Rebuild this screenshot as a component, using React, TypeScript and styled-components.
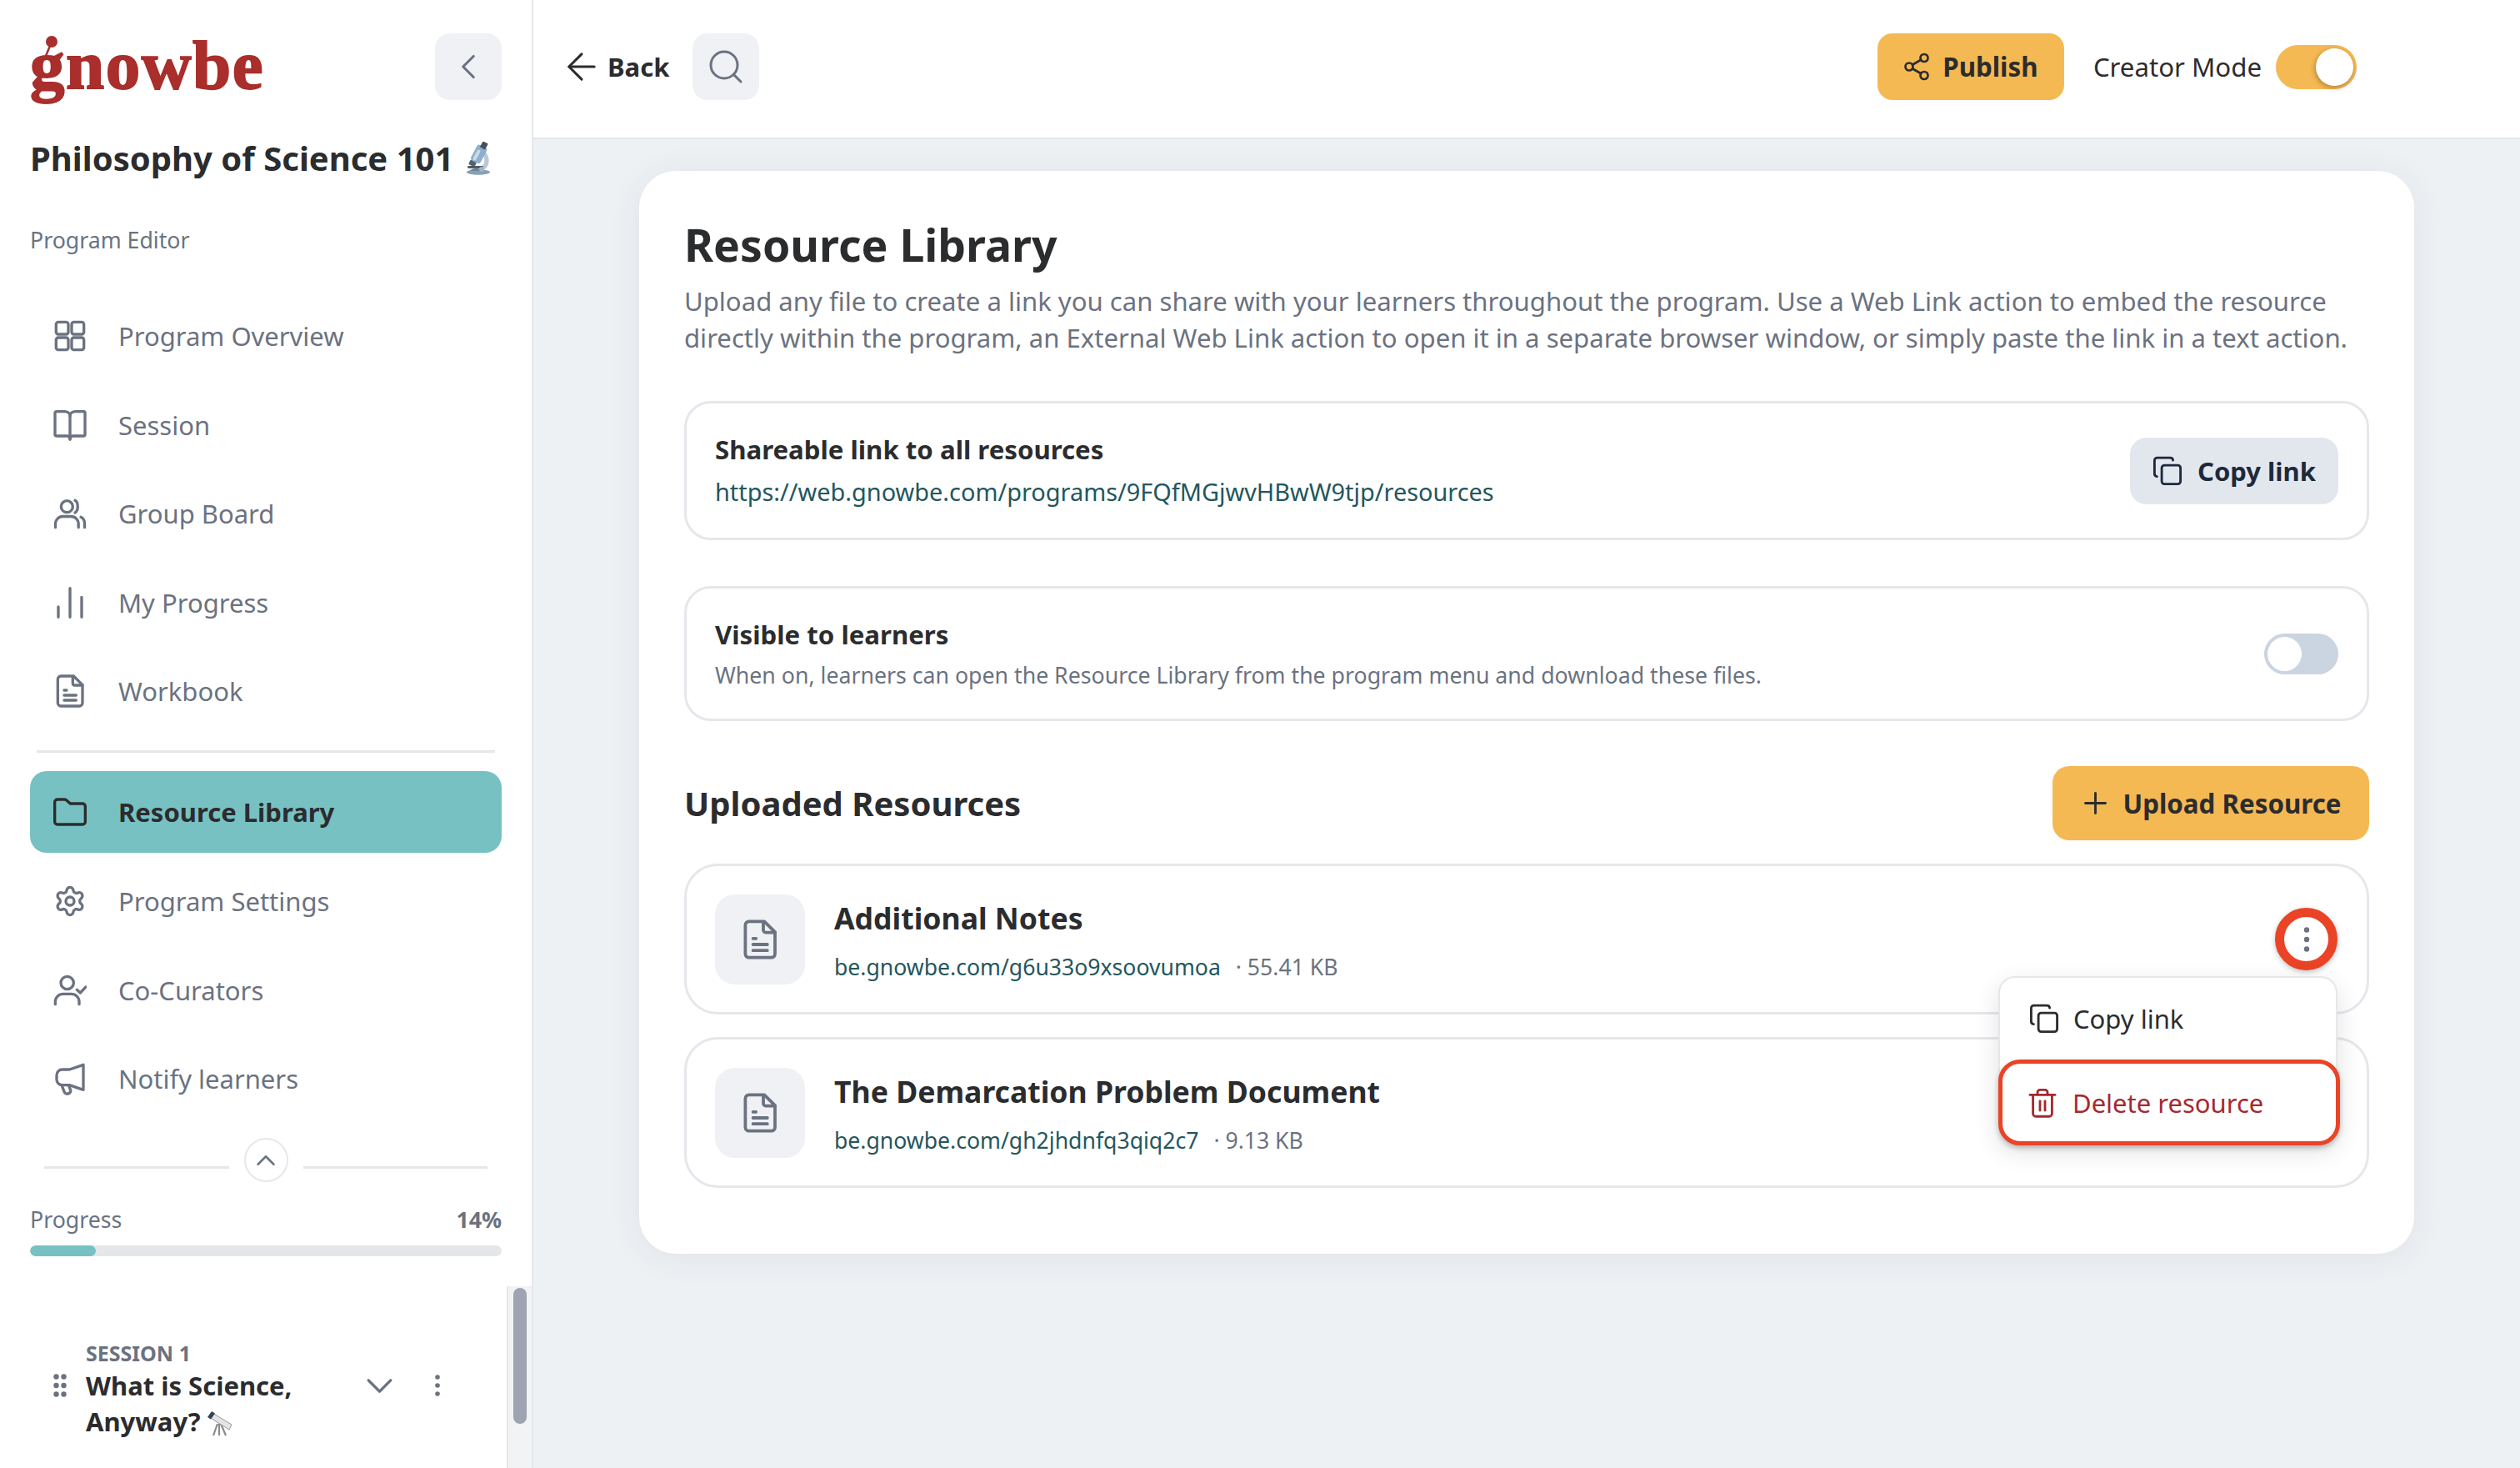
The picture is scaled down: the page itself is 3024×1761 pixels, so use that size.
import React from 'react';
import styled, { createGlobalStyle } from 'styled-components';
import { ChevronLeft, ChevronUp, ChevronDown, Settings, Share2, Plus, ArrowLeft, Search } from 'lucide-react';

const Global = createGlobalStyle`
  * { box-sizing: border-box; }
  html, body { margin: 0; padding: 0; background: #fff; }
  body { font-family: "Noto Sans", "Open Sans", sans-serif; color: #2b2c2e; }
`;

const gray = '#6b7280';
const ink = '#2b2c2e';
const line = '#e5e7eb';
const teal = '#78c1c2';
const amber = '#f5b953';
const linkColor = '#24565c';
const red = '#ea4325';

const Shell = styled.div`
  display: flex; width: 3024px; height: 1761px; overflow: hidden; background: #eef1f4;
`;
const Sidebar = styled.aside`
  width: 640px; height: 100%; flex: none; display: flex; flex-direction: column;
  background: #fff; border-right: 2px solid ${line};
`;
const SideHead = styled.div`
  display: flex; justify-content: space-between; align-items: center;
  margin: 40px 36px 0 36px; height: 80px;
`;
const Logo = styled.div`
  position: relative; font-family: "Liberation Serif", serif; font-weight: 700;
  font-size: 83px; line-height: 80px; color: #a92e2c; letter-spacing: 1.5px;
  -webkit-text-stroke: 1.8px #a92e2c; margin-top: -4px;
`;
const LogoEar = styled.svg`
  position: absolute; left: 14px; top: 3px; width: 40px; height: 34px;
`;
const SquareBtn = styled.button`
  width: 80px; height: 80px; border: 0; border-radius: 18px; background: #eff1f4; color: ${gray};
  display: flex; align-items: center; justify-content: center; padding: 0; flex: none;
`;
const Course = styled.div`
  margin: 42px 0 0 36px; height: 56px; display: flex; align-items: center; gap: 14px;
  font-size: 40px; line-height: 56px; font-weight: 700; color: ${ink}; white-space: nowrap;
`;
const SideCaption = styled.div`
  margin: 50px 0 0 36px; height: 40px; font-size: 26.7px; line-height: 40px; color: ${gray};
`;
const NavGroup = styled.nav<{ $top: number }>`
  margin: ${p => p.$top}px 36px 0 36px; display: flex; flex-direction: column; gap: 8.6px;
`;
const NavItem = styled.div<{ $active?: boolean }>`
  height: 98px; display: flex; align-items: center; gap: 38px; padding-left: 28px;
  border-radius: 20px; font-size: 31px; white-space: nowrap;
  color: ${p => (p.$active ? ink : gray)}; font-weight: ${p => (p.$active ? 700 : 400)};
  background: ${p => (p.$active ? teal : 'transparent')};
`;
const NavRule = styled.div`
  height: 3px; margin: 22px 44px 0 44px; background: ${line};
`;
const Collapse = styled.div`
  margin: 22px 53px 0 53px; display: flex; align-items: flex-start; gap: 18px;
`;
const CollapseRule = styled.div`
  flex: 1; height: 3px; margin-top: 34px; background: ${line};
`;
const CollapseBtn = styled.div`
  width: 53px; height: 53px; flex: none; border: 2px solid ${line}; border-radius: 50%;
  display: flex; align-items: center; justify-content: center; color: ${gray}; background: #fff;
`;
const ProgressHead = styled.div`
  margin: 25px 36px 0 36px; display: flex; justify-content: space-between;
  font-size: 26.7px; line-height: 40px; color: ${gray};
`;
const ProgressValue = styled.span`
  font-weight: 700;
`;
const ProgressBar = styled.div`
  margin: 11px 36px 0 36px; height: 13px; border-radius: 7px; background: #e4e6ea; overflow: hidden;
`;
const ProgressFill = styled.div`
  height: 100%; border-radius: 7px; background: ${teal};
`;
const SessionArea = styled.div`
  margin-top: 36px; flex: 1; display: flex; min-height: 0;
`;
const SessionBody = styled.div`
  flex: 1; display: flex; align-items: flex-start; padding: 62px 0 0 64px;
`;
const Grip = styled.svg`
  width: 16px; height: 28px; margin-top: 43px; flex: none; color: ${gray};
`;
const SessionText = styled.div`
  width: 300px; margin-left: 23px; flex: none;
`;
const SessionLabel = styled.div`
  font-size: 25px; line-height: 36px; font-weight: 700; color: ${gray};
`;
const SessionTitle = styled.div`
  font-size: 31px; line-height: 43px; font-weight: 700; color: ${ink};
`;
const Emoji = styled.svg`
  display: inline-block; vertical-align: -6px; margin-left: 6px;
`;
const SessionChevron = styled.div`
  margin: 31px 0 0 26px; color: ${gray}; display: flex;
`;
const SessionKebab = styled.div`
  margin: 43px 0 0 38px; color: ${gray}; display: flex;
`;
const Track = styled.div`
  width: 30px; flex: none; background: #f1f3f5; border-left: 2px solid ${line}; padding: 2px 0 0 6px;
`;
const Thumb = styled.div`
  width: 16px; height: 163px; border-radius: 8px; background: #9fa4b2;
`;
const Main = styled.main`
  flex: 1; min-width: 0; display: flex; flex-direction: column;
`;
const TopBar = styled.header`
  height: 167px; flex: none; background: #fff; border-bottom: 2px solid ${line};
  display: flex; align-items: flex-start; padding: 40px 0 0 32px;
`;
const BackLink = styled.div`
  display: flex; align-items: center; height: 80px; gap: 5px; font-size: 31px; font-weight: 700; color: ${ink};
`;
const SearchSlot = styled.div`
  margin-left: 28px;
`;
const TopRight = styled.div`
  margin-left: auto; margin-right: 196px; display: flex; align-items: center; height: 80px;
`;
const AmberBtn = styled.button<{ $h: number; $w: number; $r: number; $gap: number }>`
  height: ${p => p.$h}px; width: ${p => p.$w}px; border: 0; border-radius: ${p => p.$r}px; background: ${amber};
  color: ${ink}; font: 700 31.3px "Noto Sans", sans-serif; display: flex; align-items: center;
  justify-content: center; gap: ${p => p.$gap}px; padding: 0 2px 0 0; flex: none;
`;
const ModeLabel = styled.span`
  margin-left: 35px; font-size: 31.2px; color: ${ink}; white-space: nowrap;
`;
const ModeSwitch = styled.div`
  margin-left: 17px; width: 97px; height: 53px; border-radius: 27px; background: ${amber};
  display: flex; align-items: center; justify-content: flex-end; padding-right: 4px;
`;
const ModeThumb = styled.div`
  width: 45px; height: 45px; border-radius: 50%; background: #fff; box-shadow: -1px 2px 6px rgba(0,0,0,.3);
`;
const Content = styled.div`
  flex: 1; padding-top: 38px; display: flex; justify-content: center; align-items: flex-start;
  background: #eef1f4;
`;
const Card = styled.section`
  width: 2130px; height: 1299px; background: #fff; border-radius: 44px;
  box-shadow: 0 4px 40px rgba(30,40,60,.07); padding: 52px 54px 0;
`;
const PageTitle = styled.h1`
  margin: 0; font-size: 53.5px; line-height: 73px; font-weight: 700; color: ${ink};
`;
const PageDesc = styled.p`
  margin: 9px 0 0; font-size: 31.1px; line-height: 44px; color: ${gray}; white-space: pre;
`;
const Panel = styled.div<{ $h: number; $top: number }>`
  height: ${p => p.$h}px; margin-top: ${p => p.$top}px; border: 3px solid ${line}; border-radius: 32px;
  display: flex; align-items: center; justify-content: space-between; padding: 0 34px;
`;
const PanelTitle = styled.div`
  font-size: 31.2px; line-height: 44px; font-weight: 700; color: ${ink};
`;
const PanelLink = styled.div`
  margin-top: 7px; font-size: 28.9px; line-height: 44px; color: ${linkColor};
`;
const PanelNote = styled.div`
  margin-top: 7px; font-size: 26.7px; line-height: 40px; color: ${gray};
`;
const CopyBtn = styled.button`
  width: 250px; height: 80px; border: 0; border-radius: 20px; background: #e2e7ee; color: #1e293b;
  font: 700 31px "Noto Sans", sans-serif; display: flex; align-items: center; justify-content: center;
  gap: 18px; padding: 0;
`;
const OffSwitch = styled.div`
  width: 89px; height: 49px; border-radius: 25px; background: #cbd5e1; padding: 4px;
`;
const OffThumb = styled.div`
  width: 41px; height: 41px; border-radius: 50%; background: #fff;
`;
const SectionHead = styled.div`
  margin-top: 54px; display: flex; align-items: center; justify-content: space-between;
`;
const SectionTitle = styled.h2`
  margin: 0; font-size: 40px; line-height: 56px; font-weight: 700; color: ${ink};
`;
const ResourceRow = styled.div<{ $top: number; $raised?: boolean }>`
  position: relative; z-index: ${p => (p.$raised ? 2 : 1)};
  height: 181px; margin-top: ${p => p.$top}px; border: 3px solid ${line}; border-radius: 40px;
  display: flex; align-items: center; padding: 0 34px;
`;
const FileBox = styled.div`
  width: 108px; height: 108px; border-radius: 24px; background: #eff1f4; flex: none;
  display: flex; align-items: center; justify-content: center; color: ${gray};
`;
const ResourceText = styled.div`
  margin-left: 35px; flex: 1; padding-top: 2px;
`;
const ResourceName = styled.div`
  font-size: 35.6px; line-height: 50px; font-weight: 700; color: ${ink};
`;
const ResourceMeta = styled.div`
  margin-top: 14px; display: flex; gap: 18px; font-size: 26.6px; line-height: 40px; color: ${gray};
`;
const ResourceLink = styled.span`
  color: ${linkColor};
`;
const KebabRing = styled.div`
  width: 75px; height: 75px; margin-right: 1px; border: 11px solid ${red}; border-radius: 50%; background: #fff; color: ${gray};
  display: flex; align-items: center; justify-content: center; box-shadow: 0 2px 6px rgba(0,0,0,.25);
`;
const Menu = styled.div`
  position: absolute; top: 132px; right: 35px; width: 407px; height: 200px; background: #fff;
  border: 2px solid ${line}; border-radius: 20px; box-shadow: 0 10px 30px rgba(0,0,0,.12);
`;
const MenuItem = styled.div`
  height: 98px; display: flex; align-items: center; gap: 17px; padding: 0 0 0 35px;
  font-size: 31px; color: ${ink};
`;
const DangerItem = styled.div`
  position: relative; height: 103px; margin: 0 -5px 0 -2px; display: flex; align-items: center;
  gap: 18px; padding: 0 0 0 30px; font-size: 31px; color: #a52a2e; background: #fff;
  border: 5px solid ${red}; border-radius: 26px; box-shadow: 0 3px 6px rgba(0,0,0,.25);
`;

type IconProps = { size?: number; sw?: number };
const Svg: React.FC<IconProps & { children: React.ReactNode }> = ({ size = 40, sw = 1.8, children }) => (
  <svg width={size} height={size} viewBox="0 0 24 24" fill="none" stroke="currentColor" strokeWidth={sw} strokeLinecap="round" strokeLinejoin="round">
    {children}
  </svg>
);
const GridIcon = () => (
  <Svg sw={2}><rect x="2" y="2" width="8.8" height="8.8" rx="1.6" /><rect x="13.2" y="2" width="8.8" height="8.8" rx="1.6" /><rect x="2" y="13.2" width="8.8" height="8.8" rx="1.6" /><rect x="13.2" y="13.2" width="8.8" height="8.8" rx="1.6" /></Svg>
);
const BookIcon = () => (
  <Svg sw={2}><path d="M1.2 3.2a1 1 0 0 1 1-1H8c2.2 0 4 1.2 4 3.2 0-2 1.8-3.2 4-3.2h5.8a1 1 0 0 1 1 1v15.6a1 1 0 0 1-1 1H14c-1.2 0-2 .8-2 2.4 0-1.6-.8-2.4-2-2.4H2.2a1 1 0 0 1-1-1z" /><path d="M12 5.4V22.2" /></Svg>
);
const UsersIcon = () => (
  <Svg sw={2}><circle cx="9.8" cy="7" r="4.2" /><path d="M15.6 2.6c2.6 1.2 2.6 7.4 0 8.8" /><path d="M1.5 22v-2.5a5.4 5.4 0 0 1 5.4-5.4h5.8a5.4 5.4 0 0 1 5.4 5.4V22" /><path d="M19.8 14.6c1.6.7 2.7 2.6 2.7 4.7V22" /></Svg>
);
const BarsIcon = () => (
  <Svg sw={2}><path d="M3.6 15v7.4M12 1.6v20.8M20.4 8v14.4" /></Svg>
);
const FileIcon: React.FC<IconProps> = ({ size = 40, sw = 2 }) => (
  <Svg size={size} sw={sw}><path d="M5.4 1.2H14.6L21 7.6V20.6a2.2 2.2 0 0 1-2.2 2.2H5.4A2.2 2.2 0 0 1 3.2 20.6V3.4a2.2 2.2 0 0 1 2.2-2.2z" /><path d="M14 1.4V6.4a1.4 1.4 0 0 0 1.4 1.4H21" /><path d="M7.8 11.4h1.8M7.8 15h8.6M7.8 18.6h8.6" /></Svg>
);
const FolderIcon = () => (
  <Svg sw={2}><path d="M1 5a2 2 0 0 1 2-2h5.2c.6 0 1.1.3 1.5.7L12.2 6h8.8a2 2 0 0 1 2 2v11a2 2 0 0 1-2 2H3a2 2 0 0 1-2-2z" /></Svg>
);
const CuratorIcon = () => (
  <Svg sw={2}><circle cx="10" cy="6.6" r="4.6" /><path d="M1.4 22v-1.8a5.6 5.6 0 0 1 5.6-5.6h6a5.6 5.6 0 0 1 5.6 5.6V22" /><path d="M17 11.6l2.4 2.2 4-4.2" /></Svg>
);
const MegaIcon = () => (
  <Svg sw={2}><path d="M21.6 2v18l-10-3.4H6.4a4 4 0 0 1-4-4V9.4a4 4 0 0 1 4-4h5.2z" /><path d="M6 16.6l2 5.2a2.4 2.4 0 0 0 4.4-1.6l-1.4-3.6" /></Svg>
);
const CopyIcon: React.FC<IconProps> = ({ size = 36, sw = 1.9 }) => (
  <Svg size={size} sw={sw}><rect x="7.4" y="7.4" width="15" height="15" rx="2.2" /><path d="M3.6 16.4A2.2 2.2 0 0 1 1.6 14.2V3.6A2.2 2.2 0 0 1 3.8 1.4H14.2A2.2 2.2 0 0 1 16.4 3.4" /></Svg>
);
const TrashIcon = () => (
  <Svg size={36} sw={1.9}><path d="M2 5.6h20" /><path d="M8 5.4V3.6a2 2 0 0 1 2-2h4a2 2 0 0 1 2 2v1.8" /><path d="M4.4 5.6v15a2.2 2.2 0 0 0 2.2 2.2h10.8a2.2 2.2 0 0 0 2.2-2.2v-15" /><path d="M10 10.6v7.4M14 10.6v7.4" /></Svg>
);
const Kebab: React.FC<{ h?: number }> = ({ h = 32 }) => (
  <svg width="10" height={h} viewBox="0 0 10 32" fill="currentColor"><circle cx="5" cy="4.5" r="3.2" /><circle cx="5" cy="16" r="3.2" /><circle cx="5" cy="27.5" r="3.2" /></svg>
);
const Microscope = () => (
  <svg width="32" height="40" viewBox="0 0 32 40">
    <ellipse cx="16" cy="36.5" rx="14" ry="3.2" fill="#86a0b6" />
    <path d="M6 35c2-4 12-4 16 0z" fill="#6f8497" />
    <path d="M23 11c9 7 7 21-3 24l-4-3c9-3 9-13 4-18z" fill="#b9c9d6" />
    <rect x="10" y="4" width="13" height="21" rx="3" transform="rotate(28 16 15)" fill="#8fb0cc" />
    <rect x="12" y="9" width="4" height="14" rx="2" transform="rotate(28 14 16)" fill="#c9dbe9" />
    <rect x="19.5" y="0.5" width="7" height="8" rx="1" transform="rotate(28 23 4)" fill="#44525f" />
    <rect x="5" y="23" width="8" height="6" rx="1" transform="rotate(28 9 26)" fill="#52616f" />
    <rect x="3" y="29" width="19" height="3" rx="1.4" fill="#4f5b66" />
    <circle cx="20" cy="33" r="3" fill="#a3b3c0" />
  </svg>
);
const Telescope = () => (
  <Emoji width="32" height="32" viewBox="0 0 32 32">
    <path d="M14 17l-5 14M16 17v14M18 17l6 14" stroke="#8c8c8c" strokeWidth="2.2" fill="none" />
    <path d="M4 9l4-5 23 14-3 6z" fill="#e4e4e4" stroke="#9a9a9a" strokeWidth="1" />
    <path d="M2 9l5-7 4 2.6-5 7z" fill="#33435f" />
  </Emoji>
);

const navTop = [
  { label: 'Program Overview', icon: <GridIcon /> },
  { label: 'Session', icon: <BookIcon /> },
  { label: 'Group Board', icon: <UsersIcon /> },
  { label: 'My Progress', icon: <BarsIcon /> },
  { label: 'Workbook', icon: <FileIcon /> },
];
const navBottom = [
  { label: 'Resource Library', icon: <FolderIcon />, active: true },
  { label: 'Program Settings', icon: <Settings size={40} strokeWidth={2} /> },
  { label: 'Co-Curators', icon: <CuratorIcon /> },
  { label: 'Notify learners', icon: <MegaIcon /> },
];

export default function App() {
  return (
    <Shell>
      <Global />
      <Sidebar>
        <SideHead>
          <Logo>
            gnowbe
            <LogoEar viewBox="0 0 40 34">
              <circle cx="12" cy="9" r="7" fill="#a92e2c" />
              <path d="M10 14L5 26" stroke="#a92e2c" strokeWidth="2.5" fill="none" />
            </LogoEar>
          </Logo>
          <SquareBtn><ChevronLeft size={50} strokeWidth={1.5} /></SquareBtn>
        </SideHead>
        <Course>Philosophy of Science 101 <Microscope /></Course>
        <SideCaption>Program Editor</SideCaption>
        <NavGroup $top={46}>
          {navTop.map(n => <NavItem key={n.label}>{n.icon}{n.label}</NavItem>)}
        </NavGroup>
        <NavRule />
        <NavGroup $top={22}>
          {navBottom.map(n => <NavItem key={n.label} $active={n.active}>{n.icon}{n.label}</NavItem>)}
        </NavGroup>
        <Collapse>
          <CollapseRule />
          <CollapseBtn><ChevronUp size={38} strokeWidth={1.6} /></CollapseBtn>
          <CollapseRule />
        </Collapse>
        <ProgressHead><span>Progress</span><ProgressValue>14%</ProgressValue></ProgressHead>
        <ProgressBar><ProgressFill style={{ width: '14%' }} /></ProgressBar>
        <SessionArea>
          <SessionBody>
            <Grip viewBox="0 0 16 28" fill="currentColor">
              <circle cx="3.5" cy="3.5" r="3.2" /><circle cx="12.5" cy="3.5" r="3.2" />
              <circle cx="3.5" cy="14" r="3.2" /><circle cx="12.5" cy="14" r="3.2" />
              <circle cx="3.5" cy="24.5" r="3.2" /><circle cx="12.5" cy="24.5" r="3.2" />
            </Grip>
            <SessionText>
              <SessionLabel>SESSION 1</SessionLabel>
              <SessionTitle>What is Science, Anyway?<Telescope /></SessionTitle>
            </SessionText>
            <SessionChevron><ChevronDown size={53} strokeWidth={1.6} /></SessionChevron>
            <SessionKebab><Kebab h={28} /></SessionKebab>
          </SessionBody>
          <Track><Thumb /></Track>
        </SessionArea>
      </Sidebar>
      <Main>
        <TopBar>
          <BackLink><ArrowLeft size={52} strokeWidth={1.4} />Back</BackLink>
          <SearchSlot><SquareBtn><Search size={48} strokeWidth={1.5} /></SquareBtn></SearchSlot>
          <TopRight>
            <AmberBtn $h={80} $w={224} $r={18} $gap={13}><Share2 size={36} strokeWidth={1.8} />Publish</AmberBtn>
            <ModeLabel>Creator Mode</ModeLabel>
            <ModeSwitch><ModeThumb /></ModeSwitch>
          </TopRight>
        </TopBar>
        <Content>
          <Card>
            <PageTitle>Resource Library</PageTitle>
            <PageDesc>{'Upload any file to create a link you can share with your learners throughout the program. Use a Web Link action to embed the resource\ndirectly within the program, an External Web Link action to open it in a separate browser window, or simply paste the link in a text action.'}</PageDesc>
            <Panel $h={167} $top={54}>
              <div>
                <PanelTitle>Shareable link to all resources</PanelTitle>
                <PanelLink>https://web.gnowbe.com/programs/9FQfMGjwvHBwW9tjp/resources</PanelLink>
              </div>
              <CopyBtn><CopyIcon />Copy link</CopyBtn>
            </Panel>
            <Panel $h={162} $top={55}>
              <div>
                <PanelTitle>Visible to learners</PanelTitle>
                <PanelNote>When on, learners can open the Resource Library from the program menu and download these files.</PanelNote>
              </div>
              <OffSwitch><OffThumb /></OffSwitch>
            </Panel>
            <SectionHead>
              <SectionTitle>Uploaded Resources</SectionTitle>
              <AmberBtn $h={89} $w={380} $r={20} $gap={12}><Plus size={41} strokeWidth={1.7} />Upload Resource</AmberBtn>
            </SectionHead>
            <ResourceRow $top={28} $raised>
              <FileBox><FileIcon size={48} sw={1.9} /></FileBox>
              <ResourceText>
                <ResourceName>Additional Notes</ResourceName>
                <ResourceMeta><ResourceLink>be.gnowbe.com/g6u33o9xsoovumoa</ResourceLink><span>· 55.41 KB</span></ResourceMeta>
              </ResourceText>
              <KebabRing><Kebab /></KebabRing>
              <Menu>
                <MenuItem><CopyIcon />Copy link</MenuItem>
                <DangerItem><TrashIcon />Delete resource</DangerItem>
              </Menu>
            </ResourceRow>
            <ResourceRow $top={27}>
              <FileBox><FileIcon size={48} sw={1.9} /></FileBox>
              <ResourceText>
                <ResourceName>The Demarcation Problem Document</ResourceName>
                <ResourceMeta><ResourceLink>be.gnowbe.com/gh2jhdnfq3qiq2c7</ResourceLink><span>· 9.13 KB</span></ResourceMeta>
              </ResourceText>
            </ResourceRow>
          </Card>
        </Content>
      </Main>
    </Shell>
  );
}
